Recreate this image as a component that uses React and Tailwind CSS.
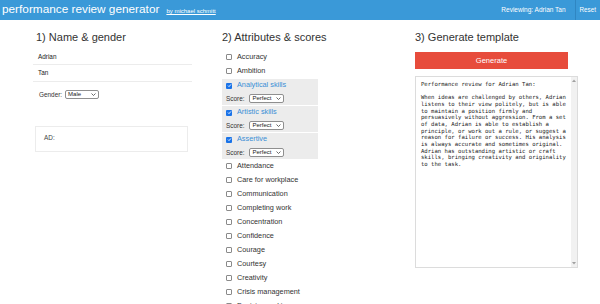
import React from "react";

const attributes = [
  { name: "Accuracy" },
  { name: "Ambition" },
  { name: "Analytical skills", checked: true },
  { name: "Artistic skills", checked: true },
  { name: "Assertive", checked: true },
  { name: "Attendance" },
  { name: "Care for workplace" },
  { name: "Communication" },
  { name: "Completing work" },
  { name: "Concentration" },
  { name: "Confidence" },
  { name: "Courage" },
  { name: "Courtesy" },
  { name: "Creativity" },
  { name: "Crisis management" },
  { name: "Decision making" },
];

const review = [
  "Performance review for Adrian Tan:",
  "",
  "When ideas are challenged by others, Adrian",
  "listens to their view politely, but is able",
  "to maintain a position firmly and",
  "persuasively without aggression. From a set",
  "of data, Adrian is able to establish a",
  "principle, or work out a rule, or suggest a",
  "reason for failure or success. His analysis",
  "is always accurate and sometimes original.",
  "Adrian has outstanding artistic or craft",
  "skills, bringing creativity and originality",
  "to the task.",
].join("\n");

const Chevron = () => (
  <svg width="5" height="3" viewBox="0 0 10 6" className="shrink-0">
    <path d="M1 1l4 4 4-4" fill="none" stroke="#444" strokeWidth="1.6" />
  </svg>
);

const Select = ({ value, className }) => (
  <div
    className={`flex items-center justify-between bg-white border border-[#8f8f8f] rounded-[2px] px-[2px] text-[6px] text-[#222] ${className}`}
  >
    <span>{value}</span>
    <Chevron />
  </div>
);

const Box = ({ checked }) =>
  checked ? (
    <span className="w-[6px] h-[6px] rounded-[1px] bg-[#1a73e8] flex items-center justify-center shrink-0">
      <svg width="5" height="5" viewBox="0 0 10 10">
        <path d="M2 5.2l2 2 4-4.4" fill="none" stroke="white" strokeWidth="1.8" />
      </svg>
    </span>
  ) : (
    <span className="w-[6px] h-[6px] rounded-[1px] border border-[#8a8a8a] bg-white shrink-0" />
  );

const App = () =>
{
  return (
    <div className="w-[600px] h-[304px] overflow-hidden bg-white text-[#333] font-['Liberation_Sans',Arial,sans-serif]">
      {/* top bar */}
      <div className="h-[20px] bg-[#3a99d8] flex items-center text-white">
        <div className="pl-[2px] text-[11.8px] leading-none">performance review generator</div>
        <a className="ml-[7px] mt-[2px] text-[6px] underline leading-none">by michael schmitt</a>
        <div className="ml-auto text-[6.5px] pr-[9px]">Reviewing: Adrian Tan</div>
        <div className="h-full flex items-center border-l border-[#2f86c2] px-[4px] text-[6.3px]">Reset</div>
      </div>

      <div className="flex pt-[11px]">
        {/* 1) name & gender */}
        <div className="ml-[36px] w-[156px]">
          <h2 className="text-[11px] leading-[13px] text-[#333]">1) Name &amp; gender</h2>
          <div className="mt-[5px] -ml-[3px]">
            <div className="h-[16px] flex items-center pl-[5px] border-b border-[#ececec] text-[6.4px] text-[#222]">Adrian</div>
            <div className="h-[17px] flex items-center pl-[5px] border-b border-[#ececec] text-[6.4px] text-[#222]">Tan</div>
          </div>
          <div className="mt-[8px] flex items-center gap-[3px] pl-[3px] text-[6.4px] text-[#333]">
            <span>Gender:</span>
            <Select value="Male" className="w-[34px] h-[9px]" />
          </div>
          <div className="mt-[26px] -ml-[1px] w-[153px] h-[26px] border border-[#ececec] pl-[8px] pt-[6px] text-[6.4px] text-[#444]">
            AD:
          </div>
        </div>

        {/* 2) attributes */}
        <div className="ml-[30px] w-[100px]">
          <h2 className="text-[11px] leading-[13px] text-[#333] whitespace-nowrap">2) Attributes &amp; scores</h2>
          <div className="mt-[6px]">
            {attributes.map((a) =>
              a.checked ? (
                <div key={a.name} className="mt-[1px] mb-0 w-[96px] bg-[#ececec]">
                  <div className="h-[13px] flex items-center gap-[5px] pl-[4px] text-[7.3px] text-[#3a8fd6]">
                    <Box checked />
                    <span>{a.name}</span>
                  </div>
                  <div className="h-[13px] flex items-center gap-[5px] pl-[4px] text-[6.4px] text-[#333]">
                    <span>Score:</span>
                    <Select value="Perfect" className="w-[35px] h-[9px]" />
                  </div>
                </div>
              ) : (
                <div key={a.name} className="h-[14px] flex items-center gap-[5px] pl-[4px] text-[7.3px] text-[#333]">
                  <Box />
                  <span className="whitespace-nowrap">{a.name}</span>
                </div>
              )
            )}
          </div>
        </div>

        {/* 3) generate */}
        <div className="ml-[93px] w-[163px]">
          <h2 className="text-[11px] leading-[13px] text-[#333]">3) Generate template</h2>
          <button className="mt-[8px] w-[153px] h-[17px] bg-[#e74c3c] text-white text-[7.5px] flex items-center justify-center">
            Generate
          </button>
          <div className="mt-[7px] h-[192px] border border-[#dcdcdc] flex">
            <div className="flex-1 pl-[5px] pt-[4px] text-[5.6px] leading-[6.67px] text-[#222] whitespace-pre font-['DejaVu_Sans_Mono',monospace] overflow-hidden">
              {review}
            </div>
            <div className="w-[6px] bg-[#f1f1f1] flex flex-col justify-between items-center py-[2px] text-[#a0a0a0]">
              <svg width="4" height="3" viewBox="0 0 8 6"><path d="M0 6l4-5 4 5z" fill="currentColor" /></svg>
              <svg width="4" height="3" viewBox="0 0 8 6"><path d="M0 0l4 5 4-5z" fill="currentColor" /></svg>
            </div>
          </div>
        </div>
      </div>
    </div>
  );
};

export default App;
